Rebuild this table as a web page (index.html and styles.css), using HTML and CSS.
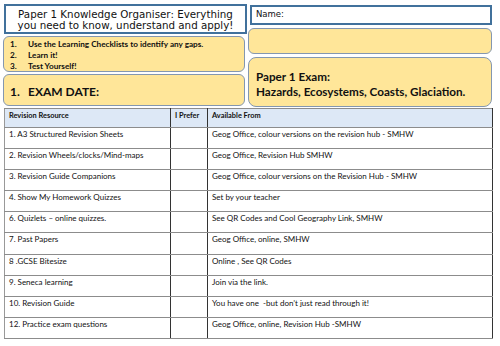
FILE: index.html
```html
<!DOCTYPE html>
<html lang="en">
<head>
    <meta charset="UTF-8">
    <meta name="viewport" content="width=device-width, initial-scale=1.0">
    <title>Paper 1 Knowledge Organiser</title>
    <link rel="stylesheet" href="styles.css">
</head>
<body>
    <div class="page">
        <div class="top">
            <div class="col">
                <div class="title-box">Paper 1 Knowledge Organiser: Everything<br>you need to know, understand and apply!</div>
                <ol class="steps">
                    <li><span class="num">1.</span>Use the Learning Checklists to identify any gaps.</li>
                    <li><span class="num">2.</span>Learn it!</li>
                    <li><span class="num">3.</span>Test Yourself!</li>
                </ol>
                <div class="exam-date"><span class="num">1.</span>EXAM DATE:</div>
            </div>
            <div class="col">
                <div class="name-box">Name:</div>
                <div class="blank-box"></div>
                <div class="paper-box">
                    <p>Paper 1 Exam:</p>
                    <p>Hazards, Ecosystems, Coasts, Glaciation.</p>
                </div>
            </div>
        </div>

        <table class="resources">
            <thead>
                <tr>
                    <th class="c1">Revision Resource</th>
                    <th class="c2">I Prefer</th>
                    <th class="c3">Available From</th>
                </tr>
            </thead>
            <tbody>
                <tr><td>1. A3 Structured Revision Sheets</td><td></td><td>Geog Office, colour versions on the revision hub - SMHW</td></tr>
                <tr><td>2. Revision Wheels/clocks/Mind-maps</td><td></td><td>Geog Office, Revision Hub SMHW</td></tr>
                <tr><td>3. Revision Guide Companions</td><td></td><td>Geog Office, colour versions on the Revision Hub - SMHW</td></tr>
                <tr><td>4. Show My Homework Quizzes</td><td></td><td>Set by your teacher</td></tr>
                <tr><td>6. Quizlets – online quizzes.</td><td></td><td>See QR Codes and Cool Geography Link, SMHW</td></tr>
                <tr><td>7. Past Papers</td><td></td><td>Geog Office, online, SMHW</td></tr>
                <tr><td>8 .GCSE Bitesize</td><td></td><td>Online , See QR Codes</td></tr>
                <tr><td>9. Seneca learning</td><td></td><td>Join via the link.</td></tr>
                <tr><td>10. Revision Guide</td><td></td><td>You have one &nbsp;-but don’t just read through it!</td></tr>
                <tr><td>12. Practice exam questions</td><td></td><td>Geog Office, online, Revision Hub -SMHW</td></tr>
            </tbody>
        </table>
    </div>
</body>
</html>
```

FILE: styles.css
```css
body {
    margin: 0;
    background-color: #fff;
    font-family: Lato, "Liberation Sans", sans-serif;
    color: #111;
}
.page {
    width: 500px;
    padding: 4px 0 0 3px;
    box-sizing: border-box;
}
.top {
    display: grid;
    grid-template-columns: 244px 244px;
    column-gap: 1px;
}
.col {
    display: flex;
    flex-direction: column;
}
.title-box {
    height: 30px;
    box-sizing: border-box;
    margin-left: 1px;
    border: 2px solid #41719c;
    font-family: "DejaVu Sans", sans-serif;
    font-size: 10.3px;
    line-height: 11px;
    text-align: center;
    padding-top: 3px;
    white-space: nowrap;
    color: #111;
}
.steps {
    list-style: none;
    margin: 2px 2px 0 0;
    height: 36px;
    box-sizing: border-box;
    padding: 2px 0 0 6px;
    background-color: #ffe699;
    border: 1px solid #8497b0;
    border-radius: 6px;
    font-weight: bold;
    font-size: 8.2px;
    line-height: 11px;
}
.num {
    display: inline-block;
    width: 18px;
}
.exam-date {
    margin: 2px 2px 0 0;
    height: 32px;
    box-sizing: border-box;
    padding: 9px 0 0 6px;
    background-color: #ffe699;
    border: 1px solid #8497b0;
    border-radius: 6px;
    font-weight: bold;
    font-size: 12px;
}
.name-box {
    height: 20px;
    box-sizing: border-box;
    margin: 1px 0 0 2px;
    border: 2px solid #41719c;
    font-family: "DejaVu Sans", sans-serif;
    font-size: 8.5px;
    padding: 2px 0 0 4px;
}
.blank-box {
    height: 26px;
    margin-top: 3px;
    box-sizing: border-box;
    background-color: #ffe699;
    border: 1px solid #8497b0;
    border-radius: 6px;
}
.paper-box {
    height: 50px;
    margin-top: 3px;
    box-sizing: border-box;
    padding: 11px 0 0 7px;
    background-color: #ffe699;
    border: 1px solid #8497b0;
    border-radius: 8px;
    font-weight: bold;
    font-size: 11.7px;
    line-height: 15px;
}
.paper-box p {
    margin: 0;
}
.resources {
    margin: 1px 0 0 1px;
    width: 489px;
    border-collapse: collapse;
    font-size: 8px;
    table-layout: fixed;
}
.resources th, .resources td {
    border-top: 1px solid #8c8c8c;
    border-bottom: 1px solid #8c8c8c;
    border-left: 1px solid #333;
    border-right: 1px solid #333;
    vertical-align: top;
    text-align: left;
    padding: 1px 4px 0 4px;
    white-space: nowrap;
}
.resources th {
    background-color: #dde8f6;
    font-size: 7.4px;
    height: 15.5px;
    padding-top: 2px;
}
.resources td {
    height: 19.2px;
    padding-top: 1px;
}
.resources tr td:first-child, .resources tr th:first-child {
    border-left-color: #999;
}
.c1 { width: 157px; }
.c2 { width: 28px; }
```
